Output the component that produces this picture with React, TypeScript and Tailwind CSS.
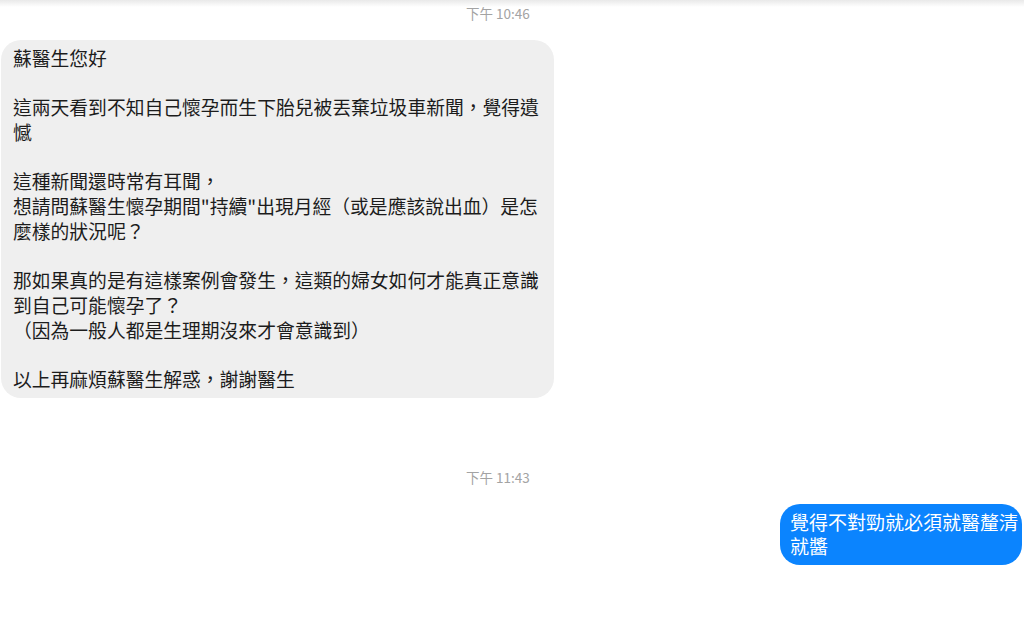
const font = { fontFamily: '"Noto Sans CJK TC", "Noto Sans", sans-serif' };

const incoming = [
  "蘇醫生您好",
  "",
  "這兩天看到不知自己懷孕而生下胎兒被丟棄垃圾車新聞，覺得遺",
  "憾",
  "",
  "這種新聞還時常有耳聞，",
  '想請問蘇醫生懷孕期間"持續"出現月經（或是應該說出血）是怎',
  "麼樣的狀況呢？",
  "",
  "那如果真的是有這樣案例會發生，這類的婦女如何才能真正意識",
  "到自己可能懷孕了？",
  "（因為一般人都是生理期沒來才會意識到）",
  "",
  "以上再麻煩蘇醫生解惑，謝謝醫生",
];

function Timestamp({ text }: { text: string }) {
  return (
    <div className="pl-[466px] text-[13.5px] leading-[16px] text-[#a3a3a3]" style={font}>
      {text}
    </div>
  );
}

export default function App() {
  return (
    <div className="relative w-[1024px] h-[642px] overflow-hidden bg-white text-[#1c1c1c]" style={font}>
      {/* top fade */}
      <div className="absolute inset-x-0 top-0 h-[7px] bg-gradient-to-b from-[#e9e9e9] to-white" />

      <div className="relative flex flex-col pt-[5px]">
        <Timestamp text="下午 10:46" />

        <div className="mt-[19px] ml-[1px] w-[553px] rounded-[20px] bg-[#efefef] pl-[12px] pr-[8px] py-[6px] text-[18.8px] leading-[24.7px]">
          {incoming.map((line, i) => (
            <div key={i} className="h-[24.7px] whitespace-nowrap">
              {line}
            </div>
          ))}
        </div>

        <div className="mt-[71px]">
          <Timestamp text="下午 11:43" />
        </div>

        <div className="mt-[19px] flex justify-end pr-[2px]">
          <div className="w-[242px] rounded-[20px] bg-[#0b84fe] pl-[10px] py-[6px] text-[19px] leading-[24.7px] text-white">
            <div className="whitespace-nowrap">覺得不對勁就必須就醫釐清</div>
            <div className="whitespace-nowrap">就醬</div>
          </div>
        </div>
      </div>
    </div>
  );
}
